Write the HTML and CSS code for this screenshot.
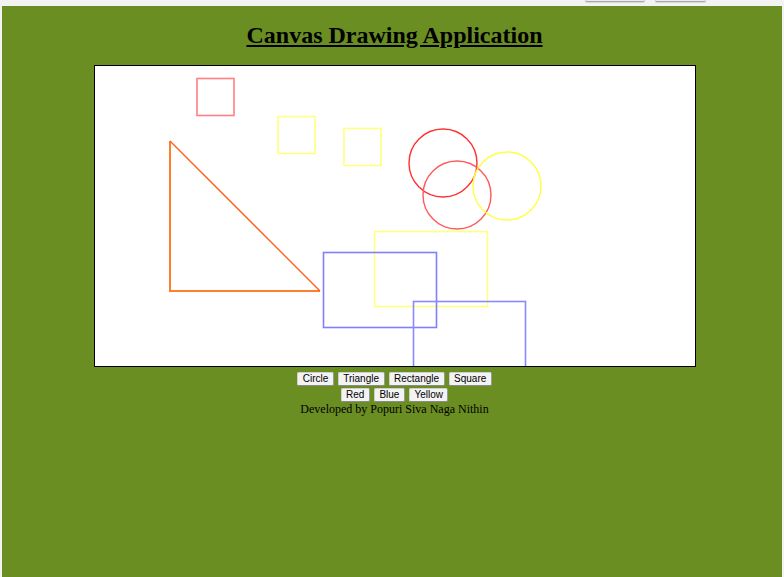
FILE: index.html
```html
<!DOCTYPE html>
<html>
<head>
<meta charset="utf-8">
<title>Canvas Drawing Application</title>
<link rel="stylesheet" href="styles.css">
</head>
<body>
<div class="topbar">
  <button class="top-btn wide" aria-label="Run"></button>
  <button class="top-btn" aria-label="Reset"></button>
</div>
<main class="app">
  <h1 class="title">Canvas Drawing Application</h1>
  <div class="board">
    <svg class="canvas" width="600" height="300" viewBox="0 0 600 300" fill="none">
      <rect x="102" y="12.5" width="37" height="37" stroke="#ff8080" stroke-width="1.6"/>
      <rect x="183" y="50.5" width="37" height="37" stroke="#ffff80" stroke-width="1.6"/>
      <rect x="249" y="62.5" width="37" height="37" stroke="#ffff80" stroke-width="1.6"/>
      <path d="M75 75 V225 H225" stroke="#ff7f2a" stroke-width="2"/>
      <path d="M75 75 L225 225" stroke="#ff5a10" stroke-width="1.3"/>
      <circle cx="348" cy="97" r="34" stroke="#ff3030" stroke-width="1.4"/>
      <circle cx="362" cy="129" r="34" stroke="#ff5a5a" stroke-width="1.4"/>
      <circle cx="412" cy="120" r="34" stroke="#ffff40" stroke-width="1.4"/>
      <rect x="279.5" y="165.5" width="113" height="75" stroke="#ffff80" stroke-width="1.6"/>
      <rect x="228.5" y="186.5" width="113" height="75" stroke="#8080ff" stroke-width="1.6"/>
      <rect x="318.5" y="235.5" width="112" height="75" stroke="#8a8aff" stroke-width="1.6"/>
    </svg>
  </div>
  <div class="controls">
    <div class="row">
      <button class="btn">Circle</button>
      <button class="btn">Triangle</button>
      <button class="btn">Rectangle</button>
      <button class="btn">Square</button>
    </div>
    <div class="row">
      <button class="btn">Red</button>
      <button class="btn">Blue</button>
      <button class="btn">Yellow</button>
    </div>
    <p class="credit">Developed by Popuri Siva Naga Nithin</p>
  </div>
</main>
</body>
</html>
```
FILE: styles.css
```css
html, body {
  margin: 0;
  padding: 0;
  height: 100%;
}
body {
  background: #f3f3f3;
  font-family: "Liberation Serif", "Times New Roman", serif;
  display: flex;
  flex-direction: column;
  overflow: hidden;
}
.topbar {
  height: 6px;
  flex: none;
  overflow: hidden;
  display: flex;
  justify-content: flex-end;
  align-items: flex-end;
  gap: 10px;
  padding-right: 78px;
}
.top-btn {
  width: 51px;
  height: 20px;
  margin-bottom: 4px;
  border: 1px solid #d0d0d0;
  border-bottom: 1px solid #a8a8a8;
  border-radius: 2px;
  background: #ececec;
  box-shadow: 0 1px 1px rgba(0,0,0,0.12);
  padding: 0;
}
.top-btn.wide {
  width: 60px;
}
.app {
  flex: 1;
  margin: 0 2px 0 2px;
  padding-left: 5px;
  background: #6b8e23;
  display: flex;
  flex-direction: column;
  align-items: center;
}
.title {
  margin: 16px 0 16px;
  font-size: 24px;
  line-height: 27px;
  font-weight: bold;
  text-decoration: underline;
  color: #000;
}
.board {
  background: #fff;
  border: 1px solid #000;
  width: 600px;
  height: 300px;
}
.canvas {
  display: block;
}
.controls {
  margin-top: 5px;
  display: flex;
  flex-direction: column;
  align-items: center;
  gap: 2px;
}
.row {
  display: flex;
  gap: 4px;
}
.btn {
  height: 14px;
  padding: 0 4.5px;
  font-family: "Liberation Sans", Arial, sans-serif;
  font-size: 10px;
  line-height: 12px;
  color: #000;
  background: #f3f3f3;
  border: 1px solid #cfcfcf;
  border-right-color: #9a9a9a;
  border-bottom-color: #8a8a8a;
  border-radius: 2px;
}
.credit {
  margin: -1px 0 0;
  font-size: 12px;
  line-height: 13px;
  color: #000;
}
```
